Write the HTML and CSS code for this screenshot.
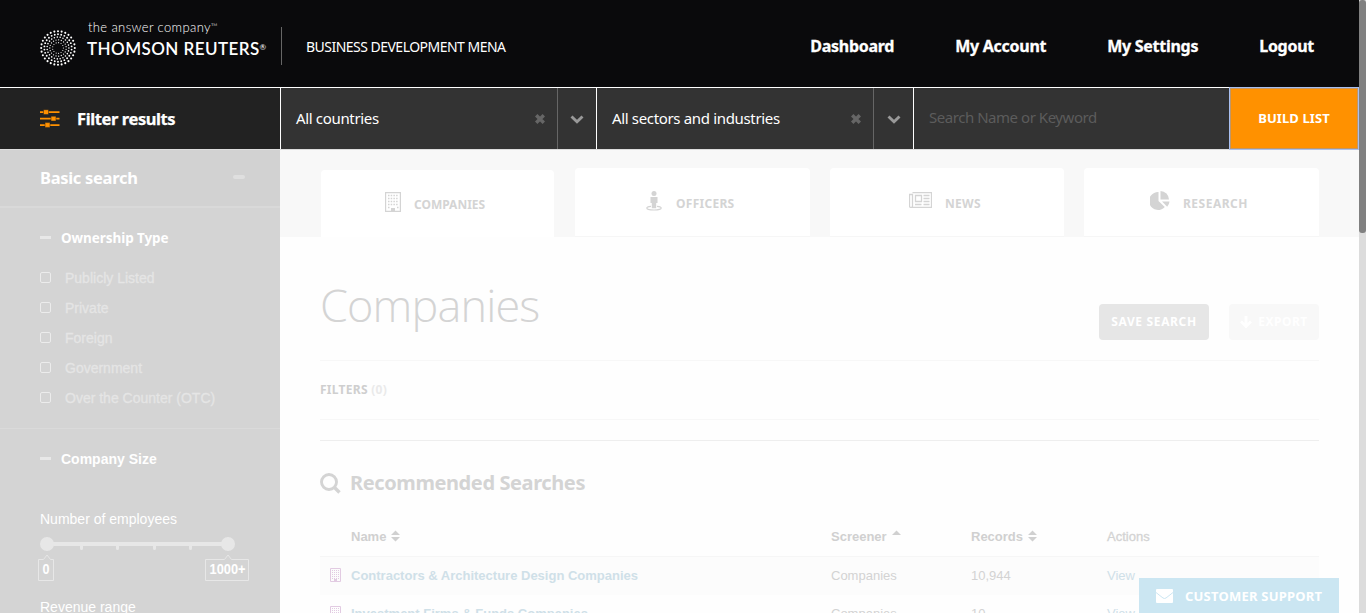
FILE: index.html
```html
<!DOCTYPE html>
<html lang="en">
<head>
<meta charset="utf-8">
<title>Business Development MENA</title>
<link rel="stylesheet" href="styles.css">
</head>
<body>
<svg width="0" height="0" class="defs">
  <symbol id="building" viewBox="0 0 16 20">
    <path d="M.6.6h14.800v18.800H.6z" fill="none" stroke="currentColor" stroke-width="1.200"/>
    <path d="M3 3.500h10.500M3 6.500h10.500M3 9.500h10.500M3 12.500h10.500M3 15.500h2M12 15.500h2" fill="none" stroke="currentColor" stroke-width="1.500" stroke-dasharray="1.500 1.200"/>
    <path d="M6 16h4v4H6z" fill="currentColor"/>
  </symbol>
  <symbol id="building-small" viewBox="0 0 11 14">
    <path d="M.5.5h10v13H.5z" fill="none" stroke="currentColor"/>
    <path d="M2 2.500h8M2 4.500h8M2 6.500h8M2 8.500h8M2 10.500h8" fill="none" stroke="currentColor" stroke-dasharray="1 1"/>
    <path d="M4 11h3v3H4z" fill="currentColor"/>
  </symbol>
  <symbol id="cross" viewBox="0 0 12 12"><path d="M2.200 2.200l7.600 7.600M9.800 2.200l-7.600 7.600" fill="none" stroke="currentColor" stroke-width="3.400"/></symbol>
  <symbol id="chevron" viewBox="0 0 14 9"><path d="M1.500 1.500L7 6.800l5.500-5.300" fill="none" stroke="currentColor" stroke-width="2.900"/></symbol>
  <symbol id="sort" viewBox="0 0 10 12"><path d="M5 0l5 5H0zM0 7h10l-5 5z" fill="currentColor"/></symbol>
</svg>
<div class="app">
  <div class="page">
    <header class="header">
      <div class="logo">
        <svg class="logo-mark" viewBox="-19 -19 38 38">
          <g fill="none" stroke="#fff" stroke-linecap="round">
            <circle r="16.800" pathLength="28" stroke-width="2.100" stroke-dasharray="0 1"/>
            <circle r="13.700" pathLength="26" stroke-width="1.900" stroke-dasharray="0 1" stroke-dashoffset=".5"/>
            <circle r="10.900" pathLength="23" stroke-width="1.600" stroke-dasharray="0 1"/>
            <circle r="8.200" pathLength="19" stroke-width="1.300" stroke-dasharray="0 1" stroke-dashoffset=".5"/>
            <circle r="5.400" pathLength="13" stroke-width="1.100" stroke-dasharray="0 1"/>
          </g>
        </svg>
        <div class="logo-text">
          <div class="tagline">the answer company<span class="tm">™</span></div>
          <div class="brand">THOMSON REUTERS<span class="reg">®</span></div>
        </div>
      </div>
      <div class="product">BUSINESS DEVELOPMENT MENA</div>
      <nav class="nav"><a>Dashboard</a><a>My Account</a><a>My Settings</a><a>Logout</a></nav>
    </header>
    <div class="filterbar">
      <div class="filter-title">
        <svg width="20" height="20" viewBox="0 0 20 20"><g fill="#ff9100"><path d="M0 2.300h19.500v1.700H0zM0 8.800h19.500v1.700H0zM0 15.200h19.500v1.700H0z"/><path d="M3.500.700h5v4.800h-5zM11 7.200h5V12h-5zM5 13.600h5v4.800H5z" stroke="#222" stroke-width=".5"/></g></svg>
        <span>Filter results</span>
      </div>
      <div class="select"><span class="value">All countries</span><svg class="clear"><use href="#cross"/></svg></div>
      <div class="arrow"><svg><use href="#chevron"/></svg></div>
      <div class="select"><span class="value">All sectors and industries</span><svg class="clear"><use href="#cross"/></svg></div>
      <div class="arrow wide"><svg><use href="#chevron"/></svg></div>
      <div class="search">Search Name or Keyword</div>
      <div class="build">BUILD LIST</div>
    </div>
    <div class="body">
      <aside class="sidebar">
        <div class="side-head"><span>Basic search</span><i></i></div>
        <section class="ownership">
          <h3><i></i><span class="own-title">Ownership Type</span></h3>
          <ul>
            <li><i></i>Publicly Listed</li><li><i></i>Private</li><li><i></i>Foreign</li><li><i></i>Government</li><li><i></i>Over the Counter (OTC)</li>
          </ul>
        </section>
        <section class="size">
          <h3><i></i><span>Company Size</span></h3>
          <div class="range-label">Number of employees</div>
          <svg class="slider" width="215" height="44" viewBox="0 0 215 44">
            <g fill="#e7e7e7"><path d="M10 5h184v4H10zM43 8h3v3.500a1.500 1.500 0 0 1-3 0zM79 8h3v3.500a1.500 1.500 0 0 1-3 0zM116 8h3v3.500a1.500 1.500 0 0 1-3 0zM152 8h3v3.500a1.500 1.500 0 0 1-3 0z"/><circle cx="10" cy="7" r="7"/><circle cx="191" cy="7" r="7"/></g>
            <g fill="none" stroke="#e7e7e7"><path d="M1.500 22.500h5L10 18l3.500 4.500h3v21h-15zM168.500 22.500h19L191 18l3.500 4.500h17v21h-43z"/></g>
            <text x="5.500" y="37" textLength="7" lengthAdjust="spacingAndGlyphs">0</text><text x="172.500" y="37" textLength="36" lengthAdjust="spacingAndGlyphs">1000+</text>
          </svg>
          <div class="range-label revenue">Revenue range</div>
        </section>
      </aside>
      <main class="main">
        <div class="tabs">
          <div class="tab active"><svg class="i-building"><use href="#building"/></svg><span>COMPANIES</span></div>
          <div class="tab officers"><svg width="16" height="20" viewBox="0 0 16 20"><g fill="currentColor"><circle cx="8" cy="2.500" r="2.500"/><path d="M4.500 6h7v6h-1.300v5.300H5.800V12H4.500z"/></g><path d="M5 15.300C2.300 15.600.8 16.300.8 17c0 1.200 3 2 7.200 2s7.200-.8 7.200-2c0-.7-1.500-1.400-4.200-1.700" fill="none" stroke="currentColor" stroke-width="1.200"/></svg><span>OFFICERS</span></div>
          <div class="tab news"><svg width="23" height="16" viewBox="0 0 23 16"><path d="M3.500.500h19v15H2Q.500 15.500.500 14V2.500h3V14q0 1.500-1.500 1.500M6.500 3.500h6v6h-6zM14.500 3.500h6M14.500 6.500h6M14.500 9.500h6M6 12.500h6.500M14.500 12.500h6" fill="none" stroke="currentColor" stroke-width="1.300"/></svg><span>NEWS</span></div>
          <div class="tab research"><svg width="20" height="19" viewBox="0 0 20 19"><g fill="currentColor"><path d="M8.500 1v9l6.300 6A9 9 0 1 1 8.500 1z"/><path d="M10.500 0a9 9 0 0 1 8.500 8.500h-8.500z"/><path d="M12 10.500h7.500a9 9 0 0 1-2.300 5.200z"/></g></svg><span>RESEARCH</span></div>
        </div>
        <div class="content">
          <div class="title-row"><h1>Companies</h1><div class="btn save">SAVE SEARCH</div><div class="btn export"><svg width="12" height="12" viewBox="0 0 12 12"><path d="M6 0v10M1 5.500l5 5 5-5" fill="none" stroke="#fff" stroke-width="2.800"/></svg><span>EXPORT</span></div></div>
          <div class="filters">FILTERS <span>(0)</span></div>
          <h2><svg width="21" height="21" viewBox="0 0 21 21"><circle cx="9" cy="9" r="7.500" fill="none" stroke="currentColor" stroke-width="2.900"/><path d="M14.500 14.500l5 5" stroke="currentColor" stroke-width="3.300"/></svg><span>Recommended Searches</span></h2>
          <div class="row thead"><i></i><div><span>Name</span><svg class="sort"><use href="#sort"/></svg></div><div><span>Screener</span><svg class="sort" viewBox="0 0 10 12"><path d="M5 0l5 5H0z" fill="currentColor"/></svg></div><div><span>Records</span><svg class="sort"><use href="#sort"/></svg></div><span class="actions">Actions</span></div>
          <div class="row shaded"><svg class="row-icon"><use href="#building-small"/></svg><a class="link">Contractors &amp; Architecture Design Companies</a><span>Companies</span><span>10,944</span><a class="view">View</a></div>
          <div class="row"><svg class="row-icon"><use href="#building-small"/></svg><a class="link">Investment Firms &amp; Funds Companies</a><span>Companies</span><span>10</span><a class="view">View</a></div>
        </div>
      </main>
    </div>
  </div>
  <div class="scroll"><div class="thumb"></div></div>
  <div class="support"><svg width="17" height="14" viewBox="0 0 17 14"><path d="M1 0h15a1 1 0 0 1 1 1v12a1 1 0 0 1-1 1H1a1 1 0 0 1-1-1V1a1 1 0 0 1 1-1z" fill="#fff"/><path d="M0 3.500l7 5.500q1.500 1 3 0l7-5.500" fill="none" stroke="#cbe6f2"/></svg><span>CUSTOMER SUPPORT</span></div>
</div>
</body>
</html>
```
FILE: styles.css
```css
* { box-sizing: border-box; }
body { margin: 0; overflow: hidden; font-family: "Liberation Sans", Arial, sans-serif; font-size: 14px; white-space: nowrap; }
h1, h2, h3, ul { margin: 0; padding: 0; font-weight: normal; list-style: none; }
svg { display: block; flex: none; }
.defs { position: absolute; }
.app { position: relative; display: flex; height: 613px; overflow: hidden; }
.page { width: 1359px; display: flex; flex-direction: column; }
.scroll { width: 7px; background: #dcdcdc; }
.thumb { height: 233px; background: #808080; border-radius: 3px; }

.header, .filterbar, .side-head, .tabs, h2, .btn, .filters, .support, .own-title { font-family: "Noto Sans", "Open Sans", sans-serif; }
.header { height: 88px; flex: none; background: #0a0a0c; border-bottom: 1px solid #fff; color: #fff; display: flex; align-items: flex-start; padding: 0 45px 0 39px; }
.logo { display: flex; width: 243px; height: 38px; margin-top: 27px; border-right: 1px solid #666; }
.logo-mark { width: 38px; height: 38px; margin-top: 2px; }
.logo-text { margin: -9px 0 0 10px; font-family: Lato, sans-serif; }
.tagline { font-size: 13px; line-height: 19px; letter-spacing: .38px; font-weight: 300; margin-left: 1px; }
.tm { font-size: 9px; vertical-align: 2px; line-height: 1; }
.brand { font-size: 17px; line-height: 24px; letter-spacing: .43px; font-weight: 600; }
.reg { font-size: 8px; vertical-align: 5px; line-height: 1; font-weight: 400; }
.product { margin: 36px 0 0 24px; font-size: 14px; line-height: 22px; letter-spacing: -.52px; }
.nav { margin: 35px 0 0 auto; display: flex; gap: 61px; font-weight: 700; font-size: 16px; line-height: 22px; letter-spacing: -.27px; -webkit-text-stroke: .3px #fff; }

.filterbar { height: 62px; flex: none; display: flex; background: #333; border-bottom: 1px solid #ddd; color: #fff; }
.filter-title { width: 281px; border-right: 1px solid #fff; background: #222; display: flex; align-items: center; padding-left: 40px; gap: 17px; font-weight: 700; font-size: 16.500px; letter-spacing: -.4px; -webkit-text-stroke: .25px #fff; }
.select { width: 277px; border-right: 1px solid #666; display: flex; align-items: center; justify-content: space-between; padding: 0 11px 0 15px; font-size: 15px; }
.value { letter-spacing: -.34px; margin-top: -1px; }
.clear { width: 12px; height: 12px; color: #666; margin-top: 1px; }
.arrow { width: 39px; border-right: 1px solid #fff; display: flex; align-items: center; justify-content: center; color: #999; }
.arrow.wide { width: 40px; }
.arrow svg { width: 14px; height: 9px; margin-top: 2px; }
.search { width: 315px; padding-left: 15px; line-height: 59px; font-size: 15px; letter-spacing: -.46px; color: #5c5c5c; }
.build { width: 130px; height: 63px; margin-top: -1px; border: 1px solid #a8bff0; box-shadow: inset 0 0 0 1px #c29665; background: #ff9100; font-weight: 700; font-size: 13px; letter-spacing: .1px; line-height: 60px; text-align: center; }

.body { display: flex; flex: 1; min-height: 0; }
.sidebar { width: 280px; background: #d4d4d4; color: #fff; overflow: hidden; }
.side-head { height: 58px; border-bottom: 2px solid #d9d9d9; background: #d2d2d2; display: flex; align-items: center; justify-content: space-between; padding: 0 35px 0 40px; font-weight: 700; font-size: 16.500px; letter-spacing: -.3px; }
.side-head span { margin-top: -1px; }
.side-head i { width: 12px; height: 4px; margin-top: -2px; border-radius: 2px; background: #dfdfdf; }
.sidebar h3 { display: flex; align-items: center; height: 20px; font-weight: 700; font-size: 14px; }
.sidebar h3 i { width: 11px; height: 3px; margin-top: -1px; background: #e8e8e8; margin-right: 10px; }
.ownership { height: 221px; border-bottom: 1px solid #dadada; padding: 20px 0 0 40px; }
.sidebar .own-title { font-size: 13.500px; letter-spacing: -.07px; }
ul { padding-top: 15px; }
li { display: flex; align-items: center; height: 30px; color: #e5e5e5; -webkit-text-stroke: .3px #e5e5e5; }
li i { width: 11px; height: 11px; margin-top: -2px; border: 1px solid #ececec; border-radius: 2px; margin-right: 14px; }
.size { padding: 20px 0 0 37px; }
.size h3, .range-label { margin-left: 3px; }
.range-label { margin-top: 40px; height: 20px; line-height: 20px; }
.slider { margin: 8px 0 0; }
.slider text { fill: #fff; font: bold 14px "Liberation Sans", sans-serif; }
.range-label.revenue { margin-top: 16px; }

.main { width: 1079px; background: #fefefe; color: #d4d4d4; overflow: hidden; }
.tabs { height: 87px; background: #f8f8f8; display: flex; align-items: flex-end; padding-left: 41px; font-weight: 700; font-size: 12px; letter-spacing: .28px; }
.tab { height: 69px; width: 235px; background: #fff; border-radius: 4px 4px 0 0; border-bottom: 1px solid #f6f6f6; margin-left: 20px; display: flex; align-items: center; padding-left: 72px; }
.tab.active { width: 233px; height: 67px; margin: 0 1px 0 0; border: 0; padding-left: 64px; letter-spacing: 0; }
.tab svg { margin-bottom: 3px; }
.tab span { margin: 2px 0 0 13px; }
.i-building { width: 16px; height: 20px; }
.tab.officers { padding-left: 71px; }
.tab.officers span { margin-left: 14px; }
.tab.news { width: 234px; padding-left: 79px; }
.tab.research { padding-left: 66px; letter-spacing: .5px; }
.tab.news svg { margin-bottom: 5px; }
.content { padding: 0 40px; }
.title-row { height: 124px; border-bottom: 1px solid #f7f7f7; display: flex; align-items: flex-start; }
h1 { font-family: "Open Sans", sans-serif; font-weight: 300; font-size: 45px; line-height: 60px; margin: 38px auto 0 0; letter-spacing: -.850px; }
.btn { height: 36px; margin-top: 67px; border-radius: 4px; color: #fff; font-weight: 700; font-size: 12px; letter-spacing: .65px; padding-bottom: 1px; display: flex; align-items: center; justify-content: center; }
.save { width: 110px; background: #e6e6e6; }
.export { width: 90px; margin-left: 20px; background: #f8f8f8; gap: 6px; letter-spacing: .5px; }
.filters { height: 59px; line-height: 57px; border-bottom: 1px solid #f7f7f7; font-size: 12px; letter-spacing: .28px; font-weight: 700; color: #cfcfcf; }
.filters span { color: #eaeaea; }
h2 { margin-top: 20px; border-top: 1px solid #eee; height: 76px; display: flex; align-items: center; padding-top: 9px; gap: 9px; font-weight: 700; font-size: 20px; letter-spacing: -.4px; }
h2 span { margin-top: -2px; }
.row { height: 38px; display: grid; grid-template-columns: 31px 480px 140px 136px 1fr; align-items: center; font-size: 13px; padding-bottom: 2px; color: #d3d3d3; }
.row.shaded { background: #fcfcfc; }
.thead { height: 41px; padding-bottom: 0; border-bottom: 1px solid #f6f6f6; font-weight: 700; color: #d0d0d0; }
.thead > div { display: flex; align-items: center; gap: 5px; }
.actions { color: #d3d3d3; font-weight: 400; -webkit-text-stroke: .3px #d3d3d3; }
.sort { width: 9px; height: 12px; }
.row-icon { width: 11px; height: 14px; margin-left: 10px; color: #e2cbe2; }
.link { color: #cfe0e8; font-weight: 700; }
.view { color: #cfe0e8; }
.support { position: absolute; left: 1139px; top: 578px; width: 200px; height: 35px; background: #cbe6f2; color: #fff; display: flex; align-items: center; padding-left: 17px; gap: 12px; font-weight: 700; font-size: 13px; letter-spacing: .22px; }
```
